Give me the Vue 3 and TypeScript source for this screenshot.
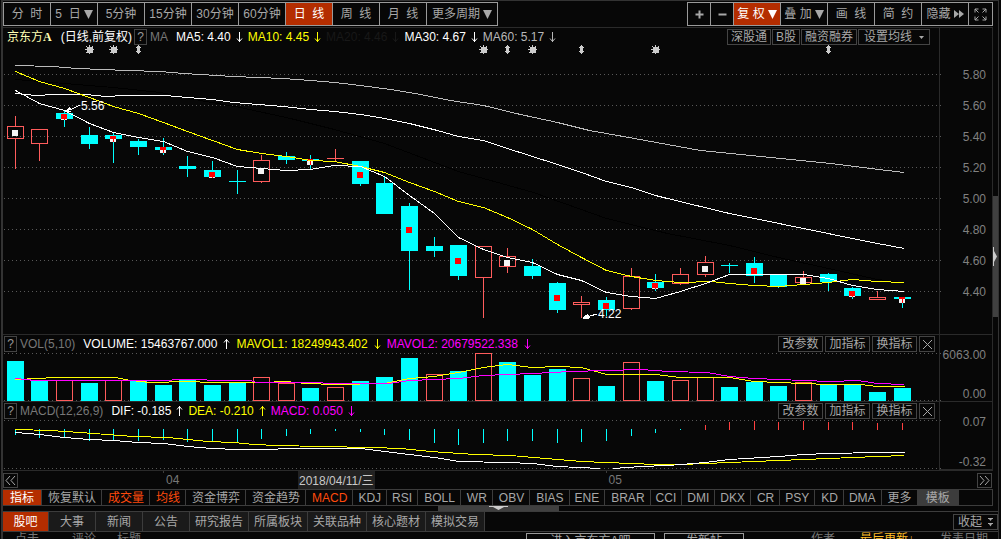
<script setup lang="ts">
interface Candle {
  x: number
  top: number
  bottom: number
  high: number
  low: number
  up: boolean
  mark: number
  volTop: number
  volUp: boolean
  macd: number
}

// x, body top, body bottom, high, low, up, mark y (0 = none), volume top, volume up, macd end
const raw: number[][] = [
  [15, 126, 139, 116, 169, 1, 130, 361, 0, 435],
  [39, 129, 144, 129, 161, 1, 0, 380, 0, 438],
  [64, 113, 119, 111, 127, 0, 114, 380, 1, 438],
  [89, 135, 144, 127, 149, 0, 0, 383, 0, 441],
  [113, 135, 139, 133, 163, 0, 136, 380, 1, 441],
  [138, 141, 147, 139, 155, 0, 0, 381, 0, 441],
  [163, 147, 150, 138, 155, 0, 147, 385, 0, 440],
  [187, 166, 169, 156, 177, 0, 0, 380, 0, 442],
  [212, 170, 177, 161, 177, 0, 172, 385, 0, 442],
  [237, 181, 182, 170, 194, 0, 0, 383, 0, 442],
  [261, 160, 182, 155, 183, 1, 168, 377, 1, 439],
  [286, 156, 160, 152, 164, 0, 0, 383, 1, 436],
  [310, 159, 161, 155, 169, 0, 159, 388, 0, 434],
  [335, 158, 159, 149, 161, 1, 0, 387, 1, 431],
  [360, 161, 184, 161, 186, 0, 172, 381, 0, 432],
  [384, 183, 214, 177, 214, 0, 0, 377, 0, 435],
  [409, 206, 251, 203, 290, 0, 227, 358, 0, 440],
  [434, 246, 251, 237, 257, 0, 0, 374, 1, 443],
  [458, 245, 276, 245, 280, 0, 258, 371, 0, 445],
  [483, 246, 278, 246, 318, 1, 0, 353, 1, 443],
  [507, 256, 267, 248, 273, 1, 260, 362, 0, 441],
  [532, 266, 276, 259, 279, 0, 0, 375, 0, 441],
  [557, 283, 310, 282, 313, 0, 295, 369, 0, 443],
  [581, 302, 305, 296, 318, 1, 0, 378, 1, 442],
  [606, 300, 310, 297, 316, 0, 303, 386, 0, 441],
  [631, 276, 309, 268, 310, 1, 0, 362, 1, 436],
  [655, 282, 288, 274, 291, 0, 283, 381, 0, 433],
  [680, 274, 284, 268, 285, 1, 0, 380, 1, 430],
  [705, 262, 275, 256, 277, 1, 266, 377, 1, 425],
  [729, 265, 266, 263, 273, 0, 0, 387, 0, 422],
  [754, 263, 276, 257, 283, 0, 268, 382, 0, 421],
  [778, 275, 287, 275, 288, 0, 0, 386, 0, 422],
  [803, 277, 283, 271, 285, 1, 278, 382, 1, 421],
  [828, 274, 282, 273, 291, 0, 0, 385, 0, 422],
  [852, 288, 296, 287, 299, 0, 291, 385, 0, 422],
  [877, 297, 300, 291, 300, 1, 0, 392, 0, 423],
  [902, 297, 299, 297, 308, 0, 297, 388, 0, 423],
]

const candles: Candle[] = raw.map((r) => ({
  x: r[0], top: r[1], bottom: r[2], high: r[3], low: r[4], up: r[5] === 1,
  mark: r[6], volTop: r[7], volUp: r[8] === 1, macd: r[9],
}))
const marked = candles.filter((c) => c.mark > 0)

function redTop(c: Candle): number {
  return Math.max(c.top, c.mark)
}
function redHeight(c: Candle): number {
  return c.up ? 0 : Math.max(0, Math.min(c.bottom, c.mark + 6) - redTop(c))
}

const gridYs: number[] = [74, 105, 136, 167, 198, 229, 260, 291]
const prices: string[] = ['5.80', '5.60', '5.40', '5.20', '5.00', '4.80', '4.60', '4.40']

const priceLines = [
  { cls: 'l-black', points: '15,79 64,83 113,87 160,92 200,100 240,107 290,118 334,129 384,143 458,171 533,192 606,218 667,233 729,245 778,257 828,268 877,279 902,282' },
  { cls: 'l-gray', points: '15,65 52,66 77,68 102,69 127,70 160,71 183,73 200,74 233,76 283,78 310,80 334,82 360,85 390,89 420,94 450,100 483,105 520,114 557,122 589,130 634,138 667,144 700,150 740,154 780,158 830,163 870,168 904,172' },
  { cls: 'l-white', points: '15,93 35,95 54,94 85,94 105,96 125,95 165,95 187,97 212,99 233,102 283,106 310,109 334,111 360,114 384,118 409,123 437,130 458,136 483,140 507,148 532,156 557,164 581,172 606,181 631,187 655,195 667,198 700,206 729,213 754,218 803,228 852,238 877,243 904,248' },
  { cls: 'l-yellow', points: '15,71 39,81 64,88 89,97 113,106 138,113 163,122 187,131 212,140 237,149 261,153 286,156 310,160 334,161 360,166 384,172 409,182 434,191 458,201 483,207 507,217 532,229 557,244 581,257 606,270 631,276 655,280 680,282 711,281 729,283 754,285 778,286 803,284 828,282 852,279 877,281 904,282' },
  { cls: 'l-white', points: '15,90 39,103 64,110 89,123 113,132 138,137 163,141 187,151 212,157 237,166 261,168 286,170 310,169 334,165 360,166 384,176 409,195 434,213 458,237 483,249 507,257 532,262 557,274 581,280 606,292 631,296 655,298 680,291 705,283 729,274 803,274 828,278 852,285 877,289 904,291' },
]
const volLines = [
  { cls: 'l-yellow', points: '15,379 39,378 52,377 115,377 130,380 150,382 187,381 212,382 261,382 286,381 305,383 335,384 384,383 409,378 434,376 458,372 483,367 507,364 532,367 557,366 581,367 606,374 655,374 680,377 729,377 754,381 778,382 828,384 860,384 877,386 904,386' },
  { cls: 'l-magenta', points: '15,378 35,380 163,380 180,379 200,379 212,380 250,380 256,382 310,382 335,383 388,383 409,380 434,379 458,378 483,375 507,374 532,373 570,371 606,370 640,369 668,371 707,372 729,376 754,378 803,380 830,381 857,380 877,383 904,384' },
]
const macdLines = [
  { cls: 'l-yellow', points: '15,429 50,430 80,432 133,436 167,437 187,439 207,441 233,442 253,444 277,445 320,446 372,447 400,448 430,451 475,454 510,455 557,459 581,461 631,463 655,464 680,464 729,462 778,460 828,458 877,456 904,455' },
  { cls: 'l-white', points: '15,432 39,434 64,437 89,439 113,440 138,442 163,443 187,446 212,448 237,449 270,449 286,448 360,448 384,451 409,454 434,457 458,461 507,462 532,463 557,466 600,468' },
  { cls: 'l-white', points: '613,468 640,466 668,465 705,462 729,459 778,456 803,454 828,453 877,452 904,452' },
]

const stars: number[] = [89, 113, 483, 532, 655]
const diamonds: number[] = [138, 507, 581, 828]

const periods = [
  { text: '分\u00a0\u00a0时' }, { text: '5\u00a0\u00a0日', drop: true }, { text: '5分钟' }, { text: '15分钟' },
  { text: '30分钟' }, { text: '60分钟' }, { text: '日\u00a0\u00a0线', on: true }, { text: '周\u00a0\u00a0线' },
  { text: '月\u00a0\u00a0线' }, { text: '更多周期', drop: true, wide: true },
]
const tools = [
  { text: '复\u00a0权', on: true, drop: true }, { text: '叠\u00a0加', drop: true },
  { text: '画\u00a0\u00a0线' }, { text: '简\u00a0\u00a0约' },
]
const maItems = [
  { text: 'MA5: 4.40', cls: 'white' }, { text: 'MA10: 4.45', cls: 'yellow' }, { text: 'MA20: 4.46', cls: 'dark' },
  { text: 'MA30: 4.67', cls: 'white' }, { text: 'MA60: 5.17', cls: 'silver' },
]
const volItems = [
  { text: 'VOLUME: 15463767.000', cls: 'white', up: true }, { text: 'MAVOL1: 18249943.402', cls: 'yellow', up: false },
  { text: 'MAVOL2: 20679522.338', cls: 'magenta', up: false },
]
const macdItems = [
  { text: 'DIF: -0.185', cls: 'white', up: true }, { text: 'DEA: -0.210', cls: 'yellow', up: true },
  { text: 'MACD: 0.050', cls: 'magenta', up: false },
]
const tags: string[] = ['深股通', 'B股', '融资融券']
const panelActions: string[] = ['改参数', '加指标', '换指标']
const indicators = [
  { text: '指标', cls: 'on' }, { text: '恢复默认' }, { text: '成交量', cls: 'hot' }, { text: '均线', cls: 'hot' },
  { text: '资金博弈' }, { text: '资金趋势' }, { text: 'MACD', cls: 'hot' }, { text: 'KDJ', cls: 'tight' },
  { text: 'RSI', cls: 'tight' }, { text: 'BOLL' }, { text: 'WR' }, { text: 'OBV' }, { text: 'BIAS' },
  { text: 'ENE', cls: 'tight' }, { text: 'BRAR' }, { text: 'CCI', cls: 'tight' }, { text: 'DMI', cls: 'tight' },
  { text: 'DKX', cls: 'tight' }, { text: 'CR' }, { text: 'PSY', cls: 'tight' }, { text: 'KD' },
  { text: 'DMA', cls: 'tight' }, { text: '更多' }, { text: '模板', cls: 'template' },
]
const tabs: string[] = ['股吧', '大事', '新闻', '公告', '研究报告', '所属板块', '关联品种', '核心题材', '模拟交易']

const arrowUp = 'M3.5 11V1M1 4.5L3.5 1.5L6 4.5'
const arrowDown = 'M3.5 1V11M1 7.5L3.5 10.5L6 7.5'
</script>

<template>
  <div class="app">
    <div class="frame">
      <div class="upper">
        <main class="main">
          <header class="toolbar">
            <div class="group">
              <button v-for="p in periods" :key="p.text" type="button" class="tb" :class="{ on: p.on, wide: p.wide }">
                {{ p.text }}<svg v-if="p.drop" class="tri" viewBox="0 0 9 9"><path d="M0 0H9L4.500 9Z" /></svg>
              </button>
            </div>
            <div class="group">
              <button type="button" class="tb small" aria-label="放大">
                <svg class="ico" viewBox="0 0 9 9"><path d="M4.500 0.500V8.500M0.500 4.500H8.500" stroke-width="2" /></svg>
              </button>
              <button type="button" class="tb small" aria-label="缩小">
                <svg class="ico" viewBox="0 0 9 9"><path d="M0.500 4.500H8.500" stroke-width="2" /></svg>
              </button>
              <button v-for="t in tools" :key="t.text" type="button" class="tb" :class="{ on: t.on }">
                {{ t.text }}<svg v-if="t.drop" class="tri" viewBox="0 0 9 9"><path d="M0 0H9L4.500 9Z" /></svg>
              </button>
              <button type="button" class="tb">
                隐藏<svg class="ff" viewBox="0 0 10 8"><path d="M0 0L5 4L0 8ZM5 0L10 4L5 8Z" /></svg>
              </button>
              <button type="button" class="tb small" aria-label="全屏">
                <svg class="full" viewBox="0 0 13 13">
                  <path d="M1 4.500V1H4.500M1 1L4.500 4.500M8.500 1H12V4.500M12 1L8.500 4.500M1 8.500V12H4.500M1 12L4.500 8.500M8.500 12H12V8.500M12 12L8.500 8.500" />
                </svg>
              </button>
            </div>
          </header>

          <section class="panel">
            <div class="plot">
              <div class="head">
                <h1 class="name"><span class="stock">京东方<b>A</b></span>(日线,前复权)</h1>
                <button type="button" class="help">?</button>
                <span class="title">MA</span>
                <span v-for="m in maItems" :key="m.text" class="val" :class="m.cls">{{ m.text }}<svg class="arrow" viewBox="0 0 7 12"><path :d="arrowDown" /></svg></span>
                <div class="actions tags">
                  <button v-for="t in tags" :key="t" type="button" class="mini tag">{{ t }}</button>
                  <button type="button" class="mini setma">设置均线<svg class="caret" viewBox="0 0 5 3"><path d="M0 0H5L2.500 3Z" /></svg></button>
                </div>
              </div>
              <svg class="chart price" viewBox="3 46 936 288" preserveAspectRatio="none">
                <line v-for="y in gridYs" :key="y" class="grid" x1="4" x2="942" :y1="y + 0.5" :y2="y + 0.5" />
                <polyline class="ln" :class="priceLines[0].cls" :points="priceLines[0].points" transform="translate(0.5 0.5)" />
                <g v-for="c in candles" :key="c.x" :class="c.up ? 'up' : 'down'">
                  <rect class="wick" :x="c.x" :y="c.high" width="1" :height="c.top - c.high" />
                  <rect class="wick" :x="c.x" :y="c.bottom" width="1" :height="c.low - c.bottom" />
                  <rect v-if="!c.up || c.bottom - c.top < 2" class="wick" :x="c.x - 8" :y="c.top" width="17" :height="c.bottom - c.top" />
                  <rect v-else class="hollow" :x="c.x - 7.5" :y="c.top + 0.5" width="16" :height="c.bottom - c.top - 1" />
                </g>
                <g v-for="c in marked" :key="'m' + c.x">
                  <rect class="mark" :x="c.x - 3" :y="c.mark" width="6" height="6" />
                  <rect v-if="!c.up" class="inner" :x="c.x" :y="c.mark" width="1" height="6" />
                  <rect class="inner" :x="c.x - 3" :y="redTop(c)" width="6" :height="redHeight(c)" />
                </g>
                <polyline v-for="(l, i) in priceLines.slice(1)" :key="i" class="ln" :class="l.cls" :points="l.points" transform="translate(0.5 0.5)" />
                <g v-for="x in stars" :key="'s' + x" class="event" :transform="`translate(${x + 0.5} 49.5)`">
                  <rect x="-2.500" y="-2.500" width="5" height="5" />
                  <path d="M0 -4.500V4.500M-4.500 0H4.500M-3.500 -3.500L3.500 3.500M3.500 -3.500L-3.500 3.500" />
                </g>
                <g v-for="x in diamonds" :key="'d' + x" class="event" :transform="`translate(${x + 0.5} 49.5)`">
                  <path class="solid" d="M0 -4.500L3 -1.500H1.500V1.500H3L0 4.500L-3 1.500H-1.500V-1.500H-3Z" />
                </g>
                <path class="note-line" d="M80 105L72 109L66 111L70 107M66 111H71M597 314L590 316L583 318L588 314M583 318H589" />
                <path class="note-tip" d="M65 111L70 107L72 110ZM583 318L588 314L590 318Z" />
                <text class="note" x="81" y="110">5.56</text>
                <text class="note" x="598" y="318">4.22</text>
              </svg>
            </div>
            <div class="axis prices"><span v-for="p in prices" :key="p">{{ p }}</span></div>
          </section>

          <section class="panel">
            <div class="plot">
              <div class="head roomy">
                <button type="button" class="help">?</button>
                <span class="title">VOL(5,10)</span>
                <span v-for="m in volItems" :key="m.text" class="val" :class="m.cls">{{ m.text }}<svg class="arrow" viewBox="0 0 7 12"><path :d="m.up ? arrowUp : arrowDown" /></svg></span>
                <div class="actions">
                  <button v-for="a in panelActions" :key="a" type="button" class="mini">{{ a }}</button>
                  <button type="button" class="mini close" aria-label="关闭"><svg viewBox="0 0 11 11"><path d="M1 1L10 10M10 1L1 10" /></svg></button>
                </div>
              </div>
              <svg class="chart volume" viewBox="3 353 936 48" preserveAspectRatio="none">
                <line class="grid" x1="4" x2="942" y1="353.5" y2="353.5" />
                <line class="grid" x1="4" x2="942" y1="400.5" y2="400.5" />
                <g v-for="c in candles" :key="c.x" :class="c.volUp ? 'up' : 'down'">
                  <rect v-if="c.volUp" class="hollow" :x="c.x - 7.5" :y="c.volTop + 0.5" width="16" :height="400 - c.volTop" />
                  <rect v-else class="wick" :x="c.x - 8" :y="c.volTop" width="17" :height="401 - c.volTop" />
                </g>
                <polyline v-for="(l, i) in volLines" :key="i" class="ln" :class="l.cls" :points="l.points" transform="translate(0.5 0.5)" />
              </svg>
            </div>
            <div class="axis ends"><span>6063.00</span><span>0.00</span></div>
          </section>

          <section class="panel">
            <div class="plot">
              <div class="head">
                <button type="button" class="help">?</button>
                <span class="title">MACD(12,26,9)</span>
                <span v-for="m in macdItems" :key="m.text" class="val" :class="m.cls">{{ m.text }}<svg class="arrow" viewBox="0 0 7 12"><path :d="m.up ? arrowUp : arrowDown" /></svg></span>
                <div class="actions">
                  <button v-for="a in panelActions" :key="a" type="button" class="mini">{{ a }}</button>
                  <button type="button" class="mini close" aria-label="关闭"><svg viewBox="0 0 11 11"><path d="M1 1L10 10M10 1L1 10" /></svg></button>
                </div>
              </div>
              <svg class="chart macd" viewBox="3 420 936 50" preserveAspectRatio="none">
                <line class="grid" x1="4" x2="942" y1="420.5" y2="420.5" />
                <line class="grid" x1="4" x2="942" y1="468.5" y2="468.5" />
                <rect v-for="c in candles" :key="c.x" :class="c.macd < 430 ? 'pos' : 'neg'" :x="c.x" :y="Math.min(429, c.macd)" width="1" :height="c.macd < 430 ? 430 - c.macd : c.macd - 429" />
                <polyline v-for="(l, i) in macdLines" :key="i" class="ln" :class="l.cls" :points="l.points" transform="translate(0.5 0.5)" />
              </svg>
            </div>
            <div class="axis ends framed"><span>0.07</span><span>-0.32</span></div>
          </section>

          <div class="dates">
            <button type="button" class="mini page" aria-label="向前"><svg viewBox="0 0 11 9"><path d="M5 0L1 4.500L5 9M10 0L6 4.500L10 9" /></svg></button>
            <span class="month first">04</span>
            <time class="current">2018/04/11/三</time>
            <span class="month">05</span>
            <button type="button" class="mini page next" aria-label="向后"><svg viewBox="0 0 11 9"><path d="M1 0L5 4.500L1 9M6 0L10 4.500L6 9" /></svg></button>
          </div>

          <nav class="indicators">
            <button v-for="n in indicators" :key="n.text" type="button" :class="n.cls">{{ n.text }}</button>
          </nav>
          <div class="grip"><svg viewBox="0 0 19 4"><path d="M0 0H19V1H15L9.500 4L4 1H0Z" /></svg></div>
        </main>
        <aside class="rail">
          <div class="thumb"><svg viewBox="0 0 4 19"><path d="M0 0H1V4L4 9.500L1 15V19H0Z" /></svg></div>
        </aside>
      </div>

      <nav class="tabs">
        <button v-for="(t, i) in tabs" :key="t" type="button" :class="{ on: i === 0 }">{{ t }}</button>
        <button type="button" class="mini fold">收起<svg viewBox="0 0 5 9"><path d="M0 0H5V1H4L2.500 3L1 1H0ZM0 5H5V6H4L2.500 8.500L1 6H0Z" /></svg></button>
      </nav>

      <div class="posts">
        <span class="col click">点击</span>
        <span class="col reply">评论</span>
        <span class="col">标题</span>
        <button type="button" class="enter">进入京东方A吧</button>
        <button type="button" class="create">发新帖</button>
        <span class="col author">作者</span>
        <span class="col latest">最后更新↓</span>
        <span class="col">发表日期</span>
      </div>
    </div>
  </div>
</template>

<style>
html,
body {
  background: #070707;
  overflow: hidden;
}
</style>

<style scoped>
* {
  box-sizing: border-box;
}
.app {
  height: 100vh;
  overflow: hidden;
  padding: 0 2px 0 1px;
  background: #070707;
  color: #a8a8a8;
  font: 12px/14px "Liberation Sans", "Noto Sans CJK SC", sans-serif;
}
.frame {
  height: 100%;
  overflow: hidden;
  border: solid #333;
  border-width: 1px 1px 0 2px;
}
button {
  margin: 0;
  padding: 0;
  border: 0;
  background: none;
  color: inherit;
  font: inherit;
  white-space: nowrap;
}
svg {
  display: block;
  flex: none;
}
.upper {
  display: flex;
}
.main {
  flex: 1;
  min-width: 0;
  padding-top: 1px;
}
.toolbar {
  display: flex;
  justify-content: space-between;
  margin-bottom: 1px;
}
.group {
  display: flex;
  border: 1px solid #9a9a9a;
}
.tb {
  display: flex;
  align-items: center;
  justify-content: center;
  width: 47px;
  height: 22px;
  border-right: 1px solid #9a9a9a;
}
.tb:last-child {
  border-right: 0;
}
.tb.wide {
  width: 70px;
}
.tb.small {
  width: 23px;
}
.tb.on,
.indicators .on,
.tabs .on {
  background: #b42d00;
  color: #fff;
}
.tri {
  width: 9px;
  height: 9px;
  margin-left: 3px;
  fill: currentColor;
}
.ico {
  width: 9px;
  height: 9px;
  stroke: currentColor;
}
.ff {
  width: 10px;
  height: 8px;
  margin-left: 3px;
  fill: currentColor;
}
.full {
  width: 13px;
  height: 13px;
  fill: none;
  stroke: currentColor;
}
.panel {
  display: grid;
  grid-template-columns: minmax(0, 1fr) 54px;
  border-top: 1px solid #2a2a2a;
}
.head {
  display: flex;
  align-items: center;
  height: 18px;
  padding-left: 1px;
  white-space: nowrap;
}
.name {
  margin: 0 2px 0 3px;
  font: inherit;
  color: #fff;
}
.stock {
  margin-right: 9px;
  color: #ffffb4;
}
.stock b {
  font: bold 12px/14px "Liberation Serif", serif;
}
.help {
  width: 13px;
  height: 16px;
  border: 1px solid #444;
  color: #999;
}
.title {
  margin: 0 8px 0 3px;
  color: #777;
}
.val {
  display: flex;
  align-items: center;
}
.arrow {
  width: 7px;
  height: 12px;
  margin: 0 5px;
  fill: none;
  stroke: currentColor;
}
.roomy .arrow {
  margin: 0 6px;
}
.white {
  color: #fff;
}
.yellow {
  color: #ff0;
}
.magenta {
  color: #f0f;
}
.silver {
  color: #b8b8b8;
}
.dark {
  color: #181818;
}
.actions {
  display: flex;
  gap: 2px;
  margin-left: auto;
  padding-right: 4px;
}
.actions.tags {
  gap: 1px;
  padding-right: 9px;
}
.mini {
  display: flex;
  align-items: center;
  justify-content: center;
  height: 16px;
  width: 45px;
  border: 1px solid #444;
}
.mini.tag {
  width: auto;
  padding: 0 3px;
}
.mini.setma {
  width: 72px;
}
.mini.close {
  width: 16px;
}
.close svg {
  width: 11px;
  height: 11px;
  stroke: currentColor;
}
.caret {
  width: 5px;
  height: 3px;
  margin-left: 7px;
  fill: currentColor;
}
.chart {
  width: 100%;
  overflow: visible;
  shape-rendering: crispEdges;
}
.price {
  height: 288px;
}
.volume {
  height: 48px;
}
.macd {
  height: 50px;
}
.grid {
  stroke: #585858;
  stroke-dasharray: 1 3;
}
.down .wick,
.neg {
  fill: #0ff;
}
.up .wick {
  fill: #ff5c5c;
}
.pos {
  fill: #ff4040;
}
.hollow {
  fill: none;
  stroke: #ff5c5c;
}
.mark {
  fill: #f4f4f4;
}
.inner {
  fill: #f00;
}
.ln {
  fill: none;
}
.l-white {
  stroke: #fff;
}
.l-gray {
  stroke: #bbb;
}
.l-black {
  stroke: #000;
}
.l-yellow {
  stroke: #ff0;
}
.l-magenta {
  stroke: #f0f;
}
.event {
  fill: #ccc;
  stroke: #ccc;
}
.event .solid {
  stroke: none;
}
.note-line {
  fill: none;
  stroke: #fff;
}
.note-tip,
.note {
  fill: #fff;
}
.axis {
  display: flex;
  flex-direction: column;
  align-items: flex-end;
  padding-right: 6px;
  border: solid #2a2a2a;
  border-width: 0 1px;
  color: #808080;
}
.prices {
  padding-top: 32px;
  line-height: 31px;
}
.ends {
  justify-content: space-between;
  padding-top: 13px;
}
.framed {
  padding-bottom: 0;
  border-bottom-width: 1px;
}
.dates {
  display: flex;
  align-items: center;
  height: 19px;
  border-top: 1px solid #2a2a2a;
}
.month {
  position: relative;
  color: #777;
}
.month::before {
  content: "";
  position: absolute;
  top: -2px;
  left: -3px;
  width: 1px;
  height: 2px;
  background: #3c3c3c;
}
.month.first {
  width: 132px;
}
.page {
  width: 15px;
  height: 15px;
  margin-right: 148px;
}
.page svg {
  width: 11px;
  height: 9px;
  fill: none;
  stroke: currentColor;
}
.page.next {
  margin: 0 1px 0 auto;
}
.current {
  height: 18px;
  margin-right: 234px;
  padding: 3px 1px 0;
  background: #222;
  color: #c8c8c8;
  white-space: nowrap;
}
.indicators {
  display: flex;
  height: 17px;
  border: 1px solid #3c3c3c;
  border-left: 0;
}
.indicators button {
  padding: 0 5px 0 6px;
  border-right: 1px solid #3c3c3c;
}
.indicators .on {
  padding: 0 7px;
}
.indicators .tight {
  padding: 0 5px;
}
.indicators .hot {
  color: #ff4a0c;
}
.indicators .template {
  padding: 0 8px;
  background: #3c3c3c;
}
.grip {
  display: flex;
  justify-content: center;
  width: 121px;
  height: 5px;
  margin: 0 auto;
  background: #404040;
}
.grip svg {
  width: 19px;
  height: 4px;
  fill: #ccc;
}
.rail {
  display: flex;
  flex-direction: column;
  justify-content: center;
  width: 5px;
}
.thumb {
  display: flex;
  align-items: center;
  height: 121px;
  background: #404040;
}
.thumb svg {
  width: 4px;
  height: 19px;
  fill: #ccc;
}
.tabs {
  display: flex;
  height: 21px;
  border: solid #3c3c3c;
  border-width: 1px 0;
}
.tabs button {
  min-width: 47px;
  padding: 0 5px;
  border-right: 1px solid #3c3c3c;
  background: #1a1a1a;
}
.tabs .on {
  min-width: 46px;
  background: #b42d00;
}
.tabs .fold {
  width: 45px;
  min-width: 0;
  margin: 2px 0 0 auto;
  border: 1px solid #444;
  background: none;
}
.fold svg {
  width: 5px;
  height: 9px;
  margin-left: 6px;
  fill: currentColor;
}
.posts {
  display: flex;
  align-items: flex-start;
  padding-top: 1px;
  line-height: 12px;
  white-space: nowrap;
}
.col {
  color: #777;
}
.click {
  margin: 0 33px 0 12px;
}
.reply {
  margin-right: 21px;
}
.posts button {
  height: 16px;
  border: 1px solid #9a9a9a;
}
.posts .enter {
  width: 129px;
  margin-left: auto;
}
.posts .create {
  width: 80px;
  margin-left: 9px;
}
.author {
  margin: 0 25px 0 67px;
}
.latest {
  margin-right: 26px;
  color: #ffbe28;
}
.posts .col:last-child {
  margin-right: 10px;
}
</style>
